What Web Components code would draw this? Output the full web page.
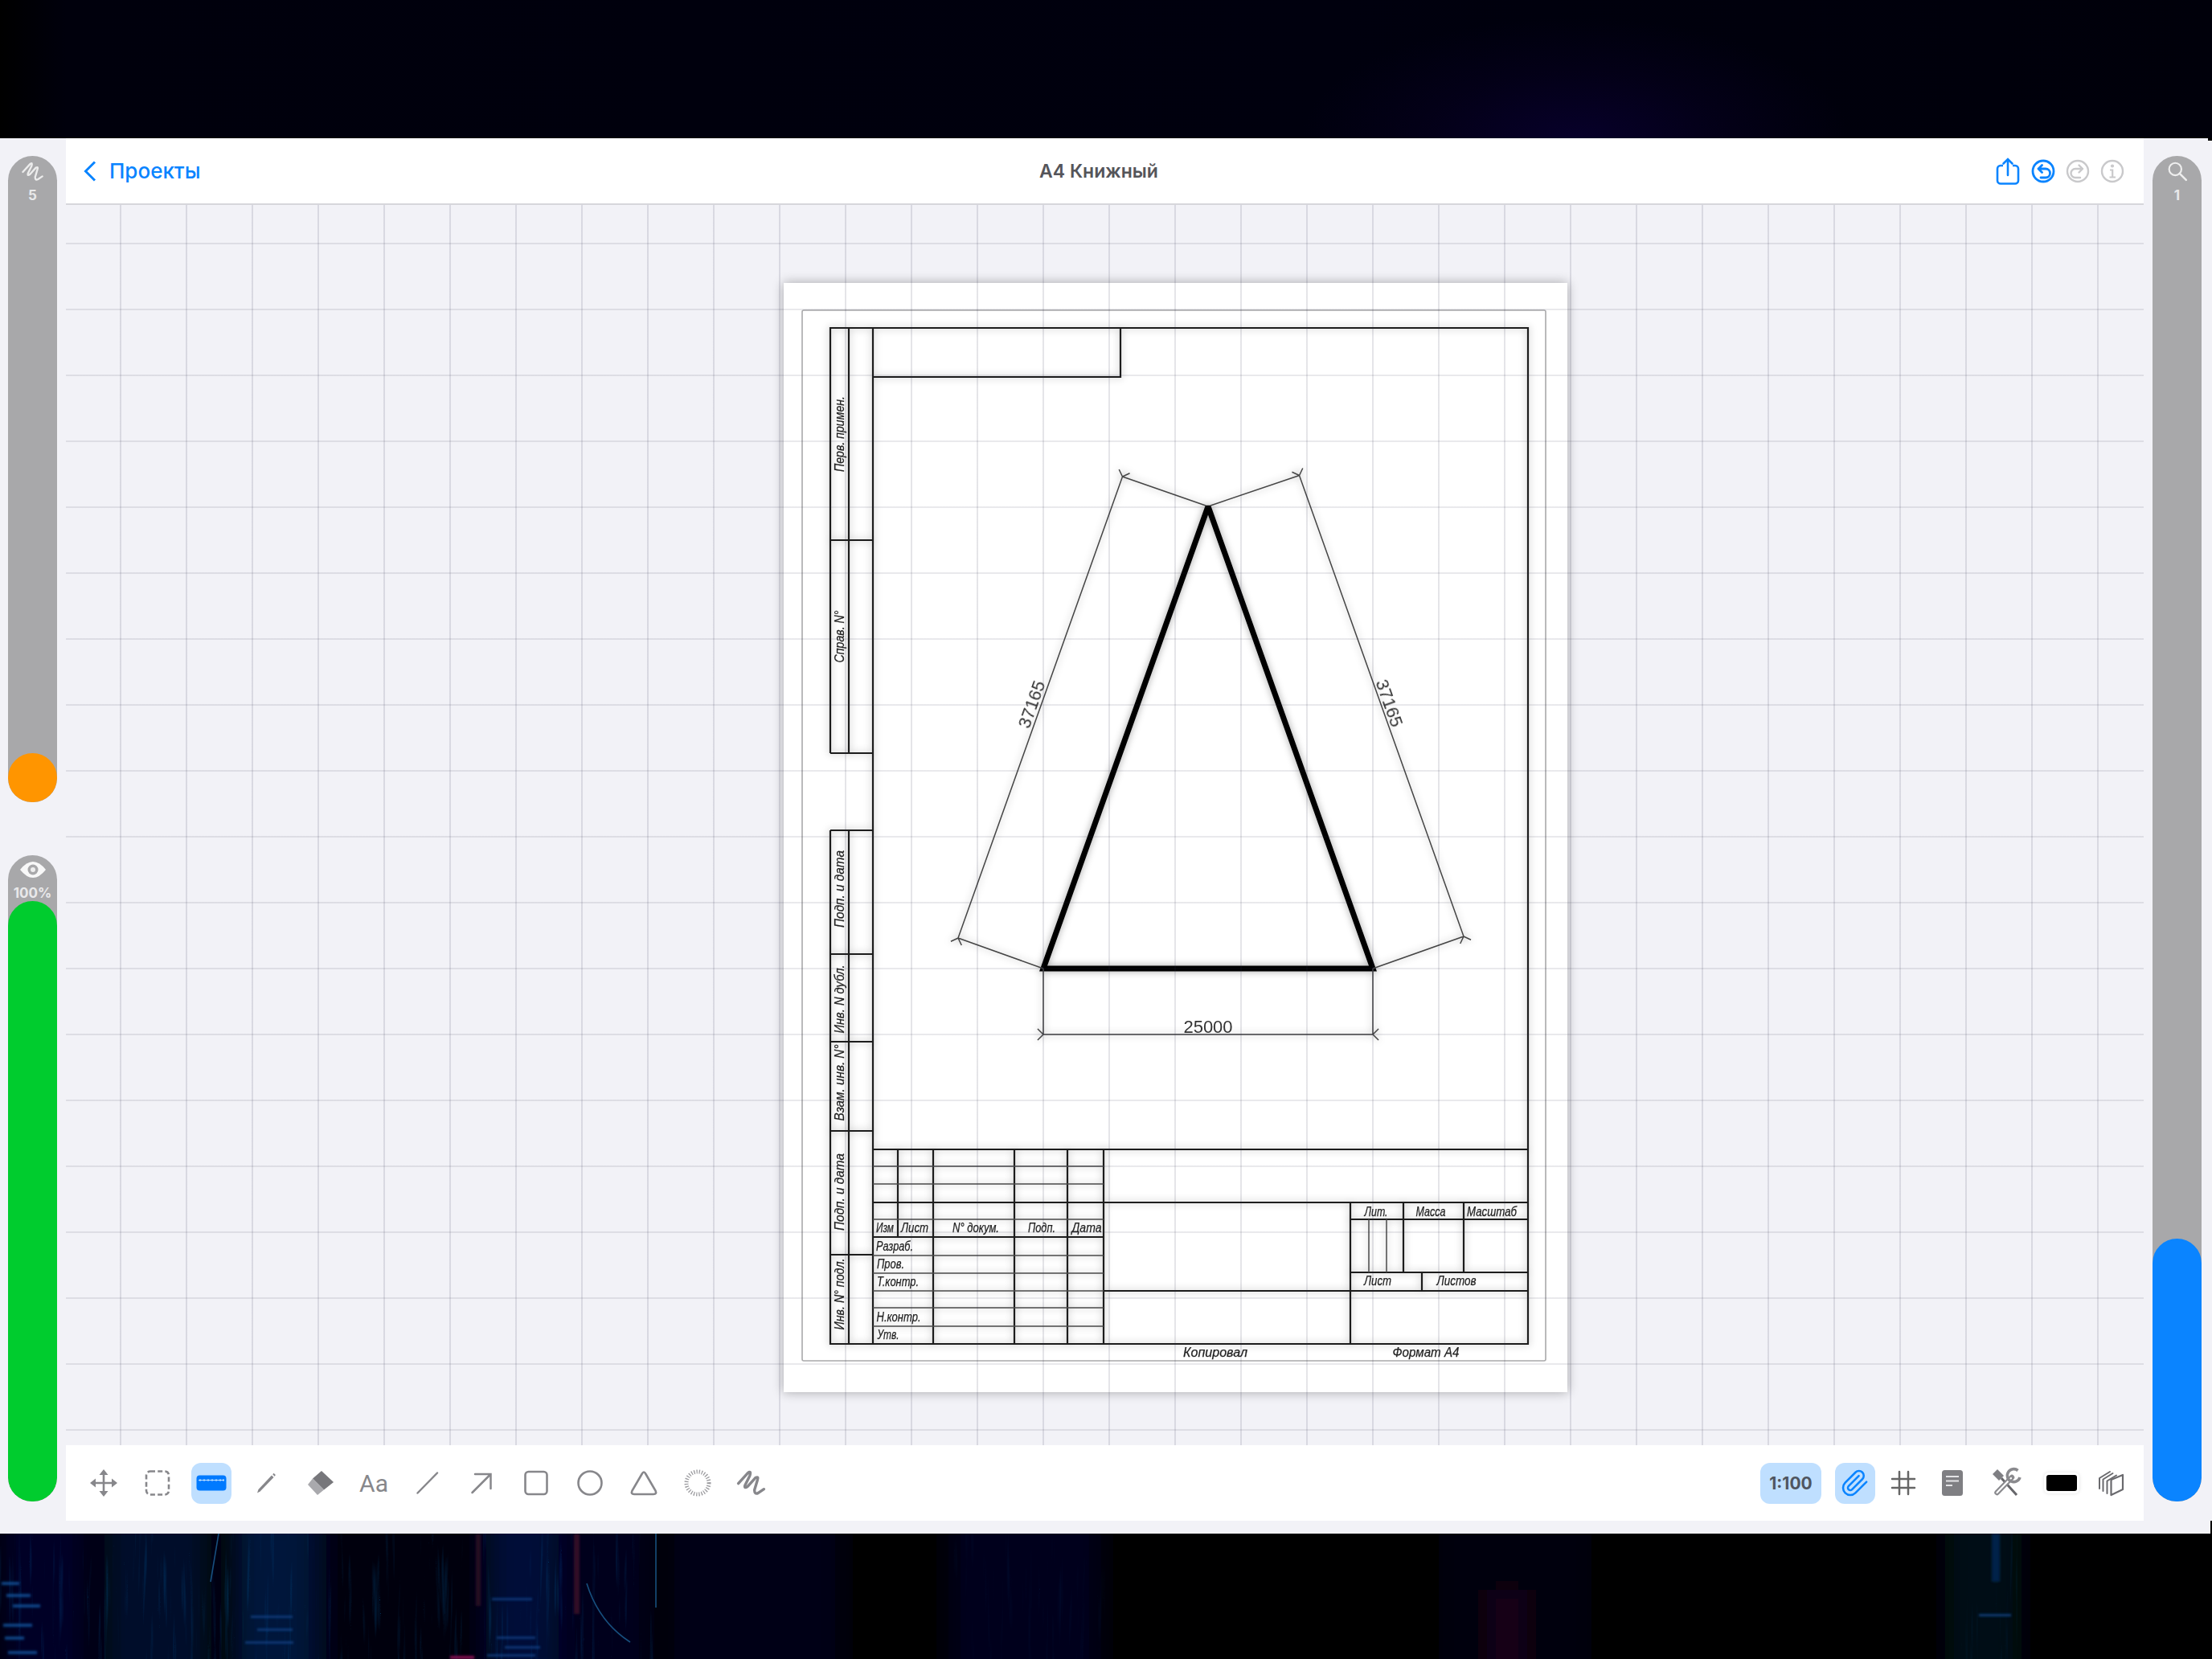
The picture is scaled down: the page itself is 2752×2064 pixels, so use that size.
<!DOCTYPE html>
<html lang="ru">
<head>
<meta charset="utf-8">
<title>А4 Книжный</title>
<style>
  html, body { margin: 0; padding: 0; background: #000; }
  body { width: 2752px; height: 2064px; overflow: hidden; font-family: Inter, "Liberation Sans", sans-serif; }
</style>
</head>
<body>
<wallpaper-band side="top"></wallpaper-band>
<app-window>
  <side-rail slot="left">
    <level-slider icon="scribble" label="5" fill="61" color="#ff9500"></level-slider>
    <level-slider icon="eye" label="100%" fill="747" color="#00cc2e"></level-slider>
  </side-rail>
  <nav-header slot="header" back="Проекты" title-text="А4 Книжный"></nav-header>
  <sheet-canvas slot="canvas"><drawing-sheet></drawing-sheet></sheet-canvas>
  <tool-bar slot="toolbar">
    <tool-button icon="move"></tool-button>
    <tool-button icon="select"></tool-button>
    <tool-button icon="ruler" active></tool-button>
    <tool-button icon="pencil"></tool-button>
    <tool-button icon="eraser"></tool-button>
    <tool-button>Aa</tool-button>
    <tool-button icon="line"></tool-button>
    <tool-button icon="arrow"></tool-button>
    <tool-button icon="rect"></tool-button>
    <tool-button icon="circle"></tool-button>
    <tool-button icon="triangle"></tool-button>
    <tool-button icon="dotted"></tool-button>
    <tool-button icon="scribbleBig"></tool-button>
    <span slot="end" class="end-group">
      <tool-button active wide="76" strong>1:100</tool-button>
      <tool-button icon="clip" active wide="50" style="margin-left:17px"></tool-button>
      <tool-button icon="hash" wide="70"></tool-button>
      <tool-button icon="doc" wide="52"></tool-button>
      <tool-button icon="tools" wide="82"></tool-button>
      <tool-button icon="swatch" wide="56"></tool-button>
      <tool-button icon="layers" wide="68"></tool-button>
    </span>
  </tool-bar>
  <side-rail slot="right" class="right">
    <level-slider icon="search" label="1" fill="327" color="#0a84ff"></level-slider>
  </side-rail>
</app-window>
<wallpaper-band side="bottom"></wallpaper-band>

<script>
const SCRIBBLE = 'M6 20L16 9Q20 6 18 12L13 22Q12 26 16 23L24 14Q28 12 26 17L23 27Q23 32 27 30L33 26';
const ICONS = {
  scribble: `<path d="${SCRIBBLE}" fill="none" stroke="currentColor" stroke-width="2.600" stroke-linecap="round" stroke-linejoin="round"/>`,
  scribbleBig: `<g transform="translate(-3.500 -3) scale(1.180)"><path d="${SCRIBBLE}" fill="none" stroke="currentColor" stroke-width="2.900" stroke-linecap="round" stroke-linejoin="round"/></g>`,
  eye: '<path d="M4 20Q20 0 36 20 20 40 4 20Z" fill="#fff" opacity=".92"/><circle cx="20" cy="20" r="6.500" fill="#a8a8aa"/><circle cx="20" cy="20" r="3" fill="#eee"/>',
  search: '<circle cx="17" cy="16" r="8.500" fill="none" stroke="#eee" stroke-width="2.400"/><path d="M23 22l9 9" stroke="#eee" stroke-width="2.800" stroke-linecap="round"/>',
  move: '<path d="M20 7V33M7 20H33" stroke="currentColor" stroke-width="2.600"/><path d="M20 3l5.500 7h-11zM20 37l5.500-7h-11zM3 20l7-5.500v11zM37 20l-7-5.500v11z" fill="currentColor"/>',
  select: '<rect x="6" y="5.500" width="28" height="29" rx="5" fill="none" stroke="currentColor" stroke-width="2.600" stroke-dasharray="6 3.200"/>',
  ruler: '<rect x="1.500" y="10.500" width="37" height="19" rx="4" fill="#007aff"/><path d="M4 16.500H36M6 15v3M11 15v3M16 15v3M21 15v3M26 15v3M31 15v3M35 15v3" stroke="#bfe0ff" stroke-width="1"/>',
  pencil: '<path d="M9 32.500L10.500 28 27 10.500l2.500 2.400L12.600 30.600z" fill="currentColor"/><path d="M28.200 9.300l1.300-1.500 2.400 2.300-1.200 1.600z" fill="currentColor"/>',
  eraser: '<path d="M22 5l15 14-12 9.500-14-14z" fill="#77777b"/><path d="M11 14.500l14 14L17 35 5 22z" fill="#a9a9ad"/>',
  line: '<path d="M7.500 32.500L32 7.500" stroke="currentColor" stroke-width="2.500" stroke-linecap="round"/>',
  arrow: '<path d="M8.500 32L31 9.500M12 9H31.500V27" fill="none" stroke="currentColor" stroke-width="2.500" stroke-linecap="round"/>',
  rect: '<rect x="6.500" y="6" width="27" height="28" rx="4" fill="none" stroke="currentColor" stroke-width="2.600"/>',
  circle: '<circle cx="20" cy="20" r="14.500" fill="none" stroke="currentColor" stroke-width="2.600"/>',
  triangle: '<path d="M17.800 8.500Q20 4.500 22.200 8.500L34.500 29.500Q36.500 34 32 34H8Q3.500 34 5.500 29.500Z" fill="none" stroke="currentColor" stroke-width="2.600"/>',
  dotted: '<circle cx="20" cy="20" r="14" fill="none" stroke="#9c9ca0" stroke-width="5" stroke-dasharray="1.300 1.900"/>',
  clip: '<g transform="translate(2 2) scale(1.500)"><path d="M21.440 11.050l-9.190 9.190a6 6 0 0 1-8.490-8.490l8.570-8.570A4 4 0 1 1 18 8.840l-8.590 8.570a2 2 0 0 1-2.830-2.830l8.490-8.480" fill="none" stroke="#0a84ff" stroke-width="1.700" stroke-linecap="round"/></g>',
  hash: '<path d="M15 6V34M26 6V34M6 15H34M6 26H34" stroke="#666" stroke-width="2.500" stroke-linecap="round"/>',
  doc: '<rect x="7" y="4" width="26" height="32" rx="3.500" fill="#7f7f83"/><path d="M12 12H28M12 17.500H28M12 23H20" stroke="#e4e4e6" stroke-width="2"/>',
  tools: '<path d="M3 9l6-6 8 8-6 6z" fill="#7f7f83"/><path d="M14 14L33 35" stroke="#66666a" stroke-width="3"/><path d="M8.500 32L27 13" stroke="#8a8a8e" stroke-width="6.500" stroke-linecap="round"/><path d="M8.500 32L26 14" stroke="#fff" stroke-width="2.200" stroke-linecap="round"/><path d="M34.500 4.500A8 8 0 1 0 37 13" fill="none" stroke="#8a8a8e" stroke-width="3.600"/>',
  layers: '<path d="M19.500 16L34 10V28L19.500 35Z" fill="none" stroke="#6a6a6e" stroke-width="2.200" stroke-linejoin="round"/><path d="M5 27V14L18 6M9.500 30V15.500L21.500 8M14.500 33V17.500L26 10.500" fill="none" stroke="#6a6a6e" stroke-width="2" stroke-linecap="round" stroke-linejoin="round"/>',
  share: '<path d="M14 13H11a4 4 0 0 0-4 4V31.500a4 4 0 0 0 4 4H29a4 4 0 0 0 4-4V17a4 4 0 0 0-4-4H26" fill="none" stroke="currentColor" stroke-width="2.600"/><path d="M20 5.500V25M14.500 10.500L20 5l5.500 5.500" fill="none" stroke="currentColor" stroke-width="2.600" stroke-linecap="round"/>',
  undo: '<circle cx="20" cy="20" r="13" fill="none" stroke="currentColor" stroke-width="2.800"/><path d="M14 17h9a5.500 5.500 0 0 1 0 11h-6M18.500 12.500L14 17l4.500 4.500" fill="none" stroke="currentColor" stroke-width="2.800" stroke-linecap="round" stroke-linejoin="round"/>',
  redo: '<circle cx="20" cy="20" r="13" fill="none" stroke="currentColor" stroke-width="2.400"/><path d="M26 17h-9a5.500 5.500 0 0 0 0 11h6M21.500 12.500L26 17l-4.500 4.500" fill="none" stroke="currentColor" stroke-width="2.400" stroke-linecap="round" stroke-linejoin="round"/>',
  info: '<circle cx="20" cy="20" r="13" fill="none" stroke="currentColor" stroke-width="2.400"/><circle cx="20" cy="13.500" r="2.100" fill="currentColor"/><path d="M17 18.500h3.200v8.500M16.500 27.500h7.500" fill="none" stroke="currentColor" stroke-width="2.200"/>'
};

function iconSvg(name, size) {
  return `<svg xmlns="http://www.w3.org/2000/svg" width="${size}" height="${size}" viewBox="0 0 40 40">${ICONS[name]}</svg>`;
}

class WallpaperBand extends HTMLElement {
  constructor() {
    super();
    this.attachShadow({ mode: 'open' });
  }

  connectedCallback() {
    if (this.getAttribute('side') === 'top') {
      this.shadowRoot.innerHTML = `
        <style>
          :host { display: block; height: 172px;
            background:
              radial-gradient(ellipse 340px 150px at 1960px 172px, #07002a 0, rgba(6,0,32,.55) 55%, transparent 100%),
              linear-gradient(90deg, #000 0, #00000c 3%, #00000e 60%, #00000a 100%); }
        </style>`;
      return;
    }
    // blurred blocks stand in for the photo behind the app window
    const block = (x, y, w, h, c, o = 1) => `<rect x="${x}" y="${y}" width="${w}" height="${h}" fill="${c}" opacity="${o}"/>`;
    let dots = '';
    [[2, 60, 22], [8, 75, 30], [16, 88, 34], [4, 112, 36], [6, 128, 24], [10, 146, 36]].forEach(([x, y, w]) => {
      dots += block(x, y, w, 4, '#0c58a4', 0.75);
    });
    [[312, 102, 52], [320, 118, 44], [305, 134, 60], [612, 80, 50], [618, 128, 48], [628, 140, 44], [606, 150, 60]].forEach(([x, y, w]) => {
      dots += block(x, y, w, 3, '#0d4a92', 0.7);
    });
    this.shadowRoot.innerHTML = `
      <style>
        :host { display: block; height: 156px; background: #000; overflow: hidden; }
        svg { display: block; }
      </style>
      <svg xmlns="http://www.w3.org/2000/svg" width="2752" height="156" viewBox="0 0 2752 156">
        <defs>
          <filter id="b2"><feGaussianBlur stdDeviation="1.600"/></filter>
          <filter id="b8"><feGaussianBlur stdDeviation="16"/></filter>
          <filter id="streak" x="0" y="0" width="1" height="1">
            <feTurbulence baseFrequency="0.14 0.007" numOctaves="2" seed="4"/>
            <feColorMatrix values="0 0 0 0 0  0 0 0 0 .14  0 0 0 0 .42  1.100 0 0 0 -.4"/>
          </filter>
        </defs>
        <g filter="url(#b8)">
          ${block(0, -30, 110, 220, '#000628')}
          ${block(130, -30, 130, 220, '#00072a')}
          ${block(290, -30, 105, 220, '#00123a')}
          ${block(400, -30, 190, 220, '#00020f')}
          ${block(605, -30, 90, 220, '#001138')}
          ${block(700, -30, 110, 220, '#00041c')}
          ${block(830, -30, 220, 220, '#000218')}
          ${block(1180, -30, 190, 220, '#00051a')}
          ${block(1790, -30, 190, 220, '#05000e')}
          ${block(1850, 70, 50, 120, '#140218')}
          ${block(2420, -30, 95, 220, '#000714')}
        </g>
        <rect x="0" y="0" width="815" height="156" filter="url(#streak)" opacity=".6"/>
        <rect x="1175" y="0" width="200" height="156" filter="url(#streak)" opacity=".18"/>
        <rect x="2440" y="0" width="70" height="156" filter="url(#streak)" opacity=".3"/>
        <g filter="url(#b2)">
          ${dots}
          ${block(592, 0, 6, 90, '#250822')}
          ${block(714, 0, 7, 100, '#300a28')}
          ${block(560, 152, 30, 4, '#801050')}
          ${block(2462, 100, 40, 3, '#0a3e76')}
          ${block(2478, 0, 10, 60, '#04224a')}
        </g>
        <path d="M816 0V92M272 0L262 60M730 62Q745 110 784 135" fill="none" stroke="#174f7e" stroke-width="1.600"/>
      </svg>`;
  }
}

class AppWindow extends HTMLElement {
  constructor() {
    super();
    this.attachShadow({ mode: 'open' });
    this.shadowRoot.innerHTML = `
      <style>
        :host { display: grid; grid-template-columns: 82px 2585px 85px; grid-template-rows: 83px 1543px 94px 16px;
          height: 1736px; background: #f2f2f7; position: relative; }
        ::slotted([slot=left]) { grid-column: 1; grid-row: 1 / 5; }
        ::slotted([slot=right]) { grid-column: 3; grid-row: 1 / 5; }
        ::slotted([slot=header]) { grid-column: 2; grid-row: 1; }
        ::slotted([slot=canvas]) { grid-column: 2; grid-row: 2; }
        ::slotted([slot=toolbar]) { grid-column: 2; grid-row: 3; }
        .tick { position: absolute; right: 0; background: #000; }
        .tick.a { top: 0; width: 5px; height: 3px; }
        .tick.b { bottom: 0; width: 2px; height: 16px; }
      </style>
      <slot name="left"></slot><slot name="header"></slot><slot name="canvas"></slot><slot name="toolbar"></slot><slot name="right"></slot>
      <i class="tick a"></i><i class="tick b"></i>`;
  }
}

class SideRail extends HTMLElement {
  constructor() {
    super();
    this.attachShadow({ mode: 'open' });
    this.shadowRoot.innerHTML = `
      <style>
        :host { display: flex; flex-direction: column; gap: 66px; padding: 22px 0 40px 10px; box-sizing: border-box; min-height: 0; }
        :host(.right) { padding-left: 11px; }
      </style>
      <slot></slot>`;
  }
}

class LevelSlider extends HTMLElement {
  constructor() {
    super();
    this.attachShadow({ mode: 'open' });
    this.shadowRoot.innerHTML = `
      <style>
        :host { flex: 1; width: 61px; min-height: 0; display: flex; flex-direction: column; align-items: center;
          background: #a8a8aa; border-radius: 31px 31px 30px 30px; overflow: hidden;
          color: #e9e9ea; font: 700 17px/17px Inter, "Liberation Sans", sans-serif; }
        .icon { height: 28px; margin-top: 6px; display: flex; align-items: center; justify-content: center; color: #ececec; }
        .label { margin-top: 7px; }
        .fill { margin-top: auto; width: 100%; border-radius: 31px 31px 30px 30px; flex: none; }
      </style>
      <div class="icon"></div>
      <div class="label"></div>
      <div class="fill"></div>`;
  }

  connectedCallback() {
    const icon = this.getAttribute('icon');
    this.shadowRoot.querySelector('.icon').innerHTML = iconSvg(icon, icon === 'eye' ? 40 : 36);
    this.shadowRoot.querySelector('.label').textContent = this.getAttribute('label');
    const fill = this.shadowRoot.querySelector('.fill');
    fill.style.height = this.getAttribute('fill') + 'px';
    fill.style.background = this.getAttribute('color');
    if (icon === 'eye') {
      this.shadowRoot.querySelector('.icon').style.cssText = 'height:20px;margin-top:8px';
      this.shadowRoot.querySelector('.label').style.marginTop = '11px';
    }
  }
}

class NavHeader extends HTMLElement {
  constructor() {
    super();
    this.attachShadow({ mode: 'open' });
    this.shadowRoot.innerHTML = `
      <style>
        :host { display: grid; grid-template-columns: 1fr auto 1fr; align-items: center; background: #fff;
          border-bottom: 2px solid #d6d6db; padding: 0 17px 0 20px; box-sizing: border-box;
          font-family: Inter, "Liberation Sans", sans-serif; }
        .back { display: flex; align-items: center; gap: 14px; color: #0a84ff; font-size: 26px; font-weight: 500; }
        .back svg { display: block; }
        .title { color: #55555a; font-size: 23px; font-weight: 600; margin-right: 18px; }
        .actions { display: flex; justify-content: flex-end; }
        .actions span { width: 43.3px; display: flex; justify-content: center; }
        .on { color: #0a84ff; }
        .off { color: #c9c9cb; }
      </style>
      <div class="back">
        <svg width="20" height="32" viewBox="0 0 20 32"><path d="M16 4.500L4.500 16 16 27.500" fill="none" stroke="#0a84ff" stroke-width="3"/></svg>
        <span class="text"></span>
      </div>
      <div class="title"></div>
      <div class="actions">
        <span class="on">${iconSvg('share', 40)}</span>
        <span class="on">${iconSvg('undo', 40)}</span>
        <span class="off">${iconSvg('redo', 40)}</span>
        <span class="off">${iconSvg('info', 40)}</span>
      </div>`;
  }

  connectedCallback() {
    this.shadowRoot.querySelector('.text').textContent = this.getAttribute('back');
    this.shadowRoot.querySelector('.title').textContent = this.getAttribute('title-text');
  }
}

class SheetCanvas extends HTMLElement {
  constructor() {
    super();
    this.attachShadow({ mode: 'open' });
    this.shadowRoot.innerHTML = `
      <style>
        :host { display: block; position: relative; overflow: hidden; background: #f2f2f7; }
        .grid { position: absolute; inset: 0; pointer-events: none;
          background-image:
            linear-gradient(to right, rgba(40,40,70,.12) 2px, transparent 2px),
            linear-gradient(to bottom, rgba(40,40,70,.1) 2px, transparent 2px);
          background-size: 82px 82px;
          background-position: 67px 47px; }
      </style>
      <slot></slot>
      <div class="grid"></div>`;
  }
}

class DrawingSheet extends HTMLElement {
  constructor() {
    super();
    this.attachShadow({ mode: 'open' });
  }

  // fork ends and line of one dimension, from a to b
  _dimension(a, b) {
    const len = Math.hypot(b[0] - a[0], b[1] - a[1]);
    const ux = (b[0] - a[0]) / len;
    const uy = (b[1] - a[1]) / len;
    const fork = (p, dx, dy) => {
      const c = Math.SQRT1_2;
      const r = 10;
      const x1 = (dx * c - dy * c) * r, y1 = (dx * c + dy * c) * r;
      const x2 = (dx * c + dy * c) * r, y2 = (-dx * c + dy * c) * r;
      return `M${p[0] + x1} ${p[1] + y1}L${p[0]} ${p[1]}L${p[0] + x2} ${p[1] + y2}`;
    };
    return `M${a[0]} ${a[1]}L${b[0]} ${b[1]}` + fork(a, -ux, -uy) + fork(b, ux, uy);
  }

  connectedCallback() {
    const labels = [
      ['Изм', 1101, 1533, 22], ['Лист', 1138, 1533, 34], ['N° докум.', 1214, 1533, 58],
      ['Подп.', 1296, 1533, 34], ['Дата', 1352, 1533, 37],
      ['Разраб.', 1113, 1556, 46], ['Пров.', 1108, 1578, 34], ['Т.контр.', 1117, 1600, 52],
      ['Н.контр.', 1118, 1644, 55], ['Утв.', 1105, 1666, 27],
      ['Лит.', 1712, 1513, 29], ['Масса', 1780, 1513, 37], ['Масштаб', 1856, 1513, 62],
      ['Лист', 1714, 1599, 34], ['Листов', 1812, 1599, 49],
      ['Копировал', 1512, 1688, 80], ['Формат А4', 1774, 1688, 83]
    ];
    const sideLabels = [
      ['Перв. примен.', 540, 94], ['Справ. N°', 792, 65], ['Подп. и дата', 1106, 96],
      ['Инв. N дубл.', 1243, 85], ['Взам. инв. N°', 1347, 95], ['Подп. и дата', 1483, 96],
      ['Инв. N° подл.', 1610, 89]
    ];
    const texts = labels.map(([t, x, y, w]) =>
      `<text x="${x}" y="${y}" textLength="${w}" lengthAdjust="spacingAndGlyphs">${t}</text>`).join('');
    const sideTexts = sideLabels.map(([t, y, w]) =>
      `<text transform="translate(1050 ${y}) rotate(-90)" textLength="${w}" lengthAdjust="spacingAndGlyphs">${t}</text>`).join('');
    const dims = this._dimension([1192, 1167], [1396.5, 593])
      + this._dimension([1821, 1165], [1616.5, 591.5])
      + this._dimension([1298, 1287], [1708, 1287]);

    this.shadowRoot.innerHTML = `
      <style>
        :host { position: absolute; left: 893px; top: 97px; width: 975px; height: 1380px; display: block;
          background: #fff; box-shadow: 0 0 13px rgba(0,0,0,.32); }
        svg { display: block; }
        .ink { filter: drop-shadow(0 0 5px rgba(0,0,0,.36)); }
        .soft { filter: blur(.45px); }
        .hand { font: italic 400 16px "Liberation Sans", sans-serif; fill: #222; stroke: #222; stroke-width: .25px; text-anchor: middle; }
        .dim { font: 400 22px "Liberation Sans", sans-serif; fill: #333; text-anchor: middle; }
      </style>
      <svg xmlns="http://www.w3.org/2000/svg" width="975" height="1380" viewBox="975 352 975 1380">
        <rect x="998" y="386" width="925" height="1307" rx="2" fill="none" stroke="#a9a9ab" stroke-width="1.600"/>
        <g class="ink">
          <path fill="none" stroke="#1c1c1c" stroke-width="2.200" d="
            M1033 937V408H1901V1672H1033V1033
            M1033 937H1086M1033 672H1086M1056 408V937M1056 1033V1672
            M1033 1033H1086M1033 1187H1086M1033 1296H1086M1033 1407H1086M1033 1561H1086
            M1086 408V1672M1394 408V469H1086
            M1086 1430H1901M1086 1496H1901M1373 1606H1901M1086 1539H1373
            M1117 1430V1539M1161 1430V1672M1262 1430V1672M1328 1430V1672M1373 1430V1672
            M1680 1496V1672M1746 1496V1583M1821 1496V1583M1769 1583V1606
            M1680 1517H1901M1680 1583H1901"/>
          <path fill="none" stroke="#4a4a4a" stroke-width="1.500" d="
            M1086 1451H1373M1086 1473H1373M1086 1517H1373M1086 1562H1373M1086 1584H1373
            M1086 1606H1373M1086 1627H1373M1086 1650H1373
            M1703 1517V1583M1725 1517V1583"/>
          <polygon points="1503,630 1708,1205 1298,1205" fill="none" stroke="#000" stroke-width="7" stroke-miterlimit="2.500"/>
          <path fill="none" stroke="#444" stroke-width="1.500" d="${dims}
            M1396.500 593L1500 629M1616.500 591.500L1506 629
            M1192 1167L1298 1205M1821 1165L1708 1205
            M1298 1205V1287M1708 1205V1287"/>
        </g>
        <g class="hand soft">${texts}${sideTexts}</g>
        <g class="dim soft">
          <text x="1503" y="1285">25000</text>
          <text transform="translate(1284 876.500) rotate(-70.400)" dy="7">37165</text>
          <text transform="translate(1728 875) rotate(70.400)" dy="7">37165</text>
        </g>
      </svg>`;
  }
}

class ToolBar extends HTMLElement {
  constructor() {
    super();
    this.attachShadow({ mode: 'open' });
    this.shadowRoot.innerHTML = `
      <style>
        :host { display: flex; align-items: center; justify-content: space-between; background: #fff; padding: 0 6px 0 13.5px; box-sizing: border-box; }
        .start, .end { display: flex; align-items: center; }
        ::slotted(.end-group) { display: flex; align-items: center; }
      </style>
      <div class="start"><slot></slot></div>
      <div class="end"><slot name="end"></slot></div>`;
  }
}

class ToolButton extends HTMLElement {
  constructor() {
    super();
    this.attachShadow({ mode: 'open' });
    this.shadowRoot.innerHTML = `
      <style>
        :host { display: flex; align-items: center; justify-content: center; width: 67.2px; height: 51px; flex: none;
          color: #87878b; font: 400 30px Roboto, "Liberation Sans", sans-serif; }
        .chip { display: flex; align-items: center; justify-content: center; height: 51px; width: 40px; border-radius: 12px; }
        :host([active]) .chip { background: #bfdfff; width: 50px; }
        :host([strong]) { color: #4f5560; font: 700 21px Inter, "Liberation Sans", sans-serif; }
        .swatch { display: block; width: 38px; height: 20px; background: #000; border-radius: 3px;
          box-shadow: 0 0 0 3px #fff, 0 0 4px 3px rgba(0,0,0,.12); }
        svg { display: block; }
      </style>
      <div class="chip"><slot></slot></div>`;
  }

  connectedCallback() {
    const chip = this.shadowRoot.querySelector('.chip');
    const icon = this.getAttribute('icon');
    const wide = this.getAttribute('wide');
    if (wide) {
      this.style.width = wide + 'px';
      if (this.hasAttribute('active')) chip.style.width = wide + 'px';
    }
    if (icon === 'swatch') {
      chip.innerHTML = '<span class="swatch"></span>';
    } else if (icon) {
      chip.innerHTML = iconSvg(icon, 40);
    }
  }
}

customElements.define('wallpaper-band', WallpaperBand);
customElements.define('app-window', AppWindow);
customElements.define('side-rail', SideRail);
customElements.define('level-slider', LevelSlider);
customElements.define('nav-header', NavHeader);
customElements.define('sheet-canvas', SheetCanvas);
customElements.define('drawing-sheet', DrawingSheet);
customElements.define('tool-bar', ToolBar);
customElements.define('tool-button', ToolButton);
</script>
</body>
</html>
